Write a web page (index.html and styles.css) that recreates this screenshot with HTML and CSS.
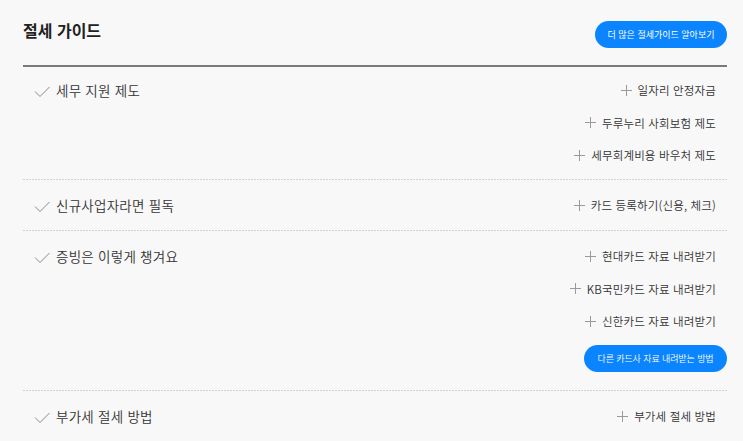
FILE: index.html
```html
<!DOCTYPE html>
<html lang="ko">
<head>
<meta charset="utf-8">
<link rel="stylesheet" href="styles.css">
</head>
<body>
<div class="page">
  <header class="head">
    <h1 class="title">절세 가이드</h1>
    <a class="btn btn-more">더 많은 절세가이드 알아보기</a>
  </header>

  <section class="row row-first">
    <div class="label"><svg class="check" viewBox="0 0 16 12"><path d="M1 5.5 L6 10.5 L15.5 1"/></svg>세무 지원 제도</div>
    <ul class="items">
      <li><svg class="plus" viewBox="0 0 11 11"><path d="M5.5 0V11M0 5.5H11"/></svg>일자리 안정자금</li>
      <li><svg class="plus" viewBox="0 0 11 11"><path d="M5.5 0V11M0 5.5H11"/></svg>두루누리 사회보험 제도</li>
      <li><svg class="plus" viewBox="0 0 11 11"><path d="M5.5 0V11M0 5.5H11"/></svg>세무회계비용 바우처 제도</li>
    </ul>
  </section>

  <section class="row">
    <div class="label"><svg class="check" viewBox="0 0 16 12"><path d="M1 5.5 L6 10.5 L15.5 1"/></svg>신규사업자라면 필독</div>
    <ul class="items">
      <li><svg class="plus" viewBox="0 0 11 11"><path d="M5.5 0V11M0 5.5H11"/></svg>카드 등록하기(신용, 체크)</li>
    </ul>
  </section>

  <section class="row">
    <div class="label"><svg class="check" viewBox="0 0 16 12"><path d="M1 5.5 L6 10.5 L15.5 1"/></svg>증빙은 이렇게 챙겨요</div>
    <ul class="items">
      <li><svg class="plus" viewBox="0 0 11 11"><path d="M5.5 0V11M0 5.5H11"/></svg>현대카드 자료 내려받기</li>
      <li><svg class="plus" viewBox="0 0 11 11"><path d="M5.5 0V11M0 5.5H11"/></svg>KB국민카드 자료 내려받기</li>
      <li><svg class="plus" viewBox="0 0 11 11"><path d="M5.5 0V11M0 5.5H11"/></svg>신한카드 자료 내려받기</li>
      <li class="btn-item"><a class="btn btn-other">다른 카드사 자료 내려받는 방법</a></li>
    </ul>
  </section>

  <section class="row">
    <div class="label"><svg class="check" viewBox="0 0 16 12"><path d="M1 5.5 L6 10.5 L15.5 1"/></svg>부가세 절세 방법</div>
    <ul class="items">
      <li><svg class="plus" viewBox="0 0 11 11"><path d="M5.5 0V11M0 5.5H11"/></svg>부가세 절세 방법</li>
    </ul>
  </section>
</div>
</body>
</html>
```

FILE: styles.css
```css
html, body {
  margin: 0;
  padding: 0;
  background: #f8f8f8;
}
body {
  font-family: "Noto Sans CJK KR", "Noto Sans", sans-serif;
  color: #333;
}
.page {
  padding: 21px 16px 0 23px;
}
.head {
  display: flex;
  justify-content: space-between;
  align-items: flex-start;
  padding-bottom: 17px;
  border-bottom: 2px solid #7a7a7a;
}
.title {
  margin: -1px 0 0;
  font-size: 16px;
  line-height: 20px;
  font-weight: 700;
  color: #222;
  letter-spacing: 0;
}
.btn {
  display: inline-flex;
  align-items: center;
  justify-content: center;
  background: #0a84ff;
  color: #fff;
  border-radius: 14px;
  height: 27px;
  font-size: 9px;
  text-decoration: none;
}
.btn-more {
  width: 132px;
}
.btn-other {
  width: 143px;
  letter-spacing: -0.1px;
}
.row {
  display: flex;
  justify-content: space-between;
  align-items: flex-start;
  padding: 16px 11px 15px 11px;
  background-image: repeating-linear-gradient(to right, #d2d2d2 0 2px, transparent 2px 3px);
  background-size: 100% 1px;
  background-repeat: no-repeat;
  background-position: left top;
}
.row-first {
  background-image: none;
  padding-top: 13px;
  padding-bottom: 14px;
}
.label {
  display: flex;
  align-items: center;
  font-size: 13.5px;
  line-height: 20px;
  letter-spacing: 0.25px;
  font-weight: 350;
  color: #333;
}
.check {
  width: 16px;
  height: 12px;
  margin-right: 6px;
  margin-top: 3px;
  fill: none;
  stroke: #8a8a8a;
  stroke-width: 1;
}
.items {
  list-style: none;
  margin: 0;
  padding: 0;
  display: flex;
  flex-direction: column;
  align-items: flex-end;
  gap: 12.5px;
}
.items li {
  display: flex;
  align-items: center;
  font-size: 11.5px;
  line-height: 20px;
  letter-spacing: 0.15px;
  font-weight: 350;
  color: #333;
}
.plus {
  width: 11px;
  height: 11px;
  margin-right: 6px;
  fill: none;
  stroke: #9a9a9a;
  stroke-width: 1;
}
.items li.btn-item {
  margin-top: 1.5px;
  margin-bottom: 3px;
  margin-right: -11px;
}
```
